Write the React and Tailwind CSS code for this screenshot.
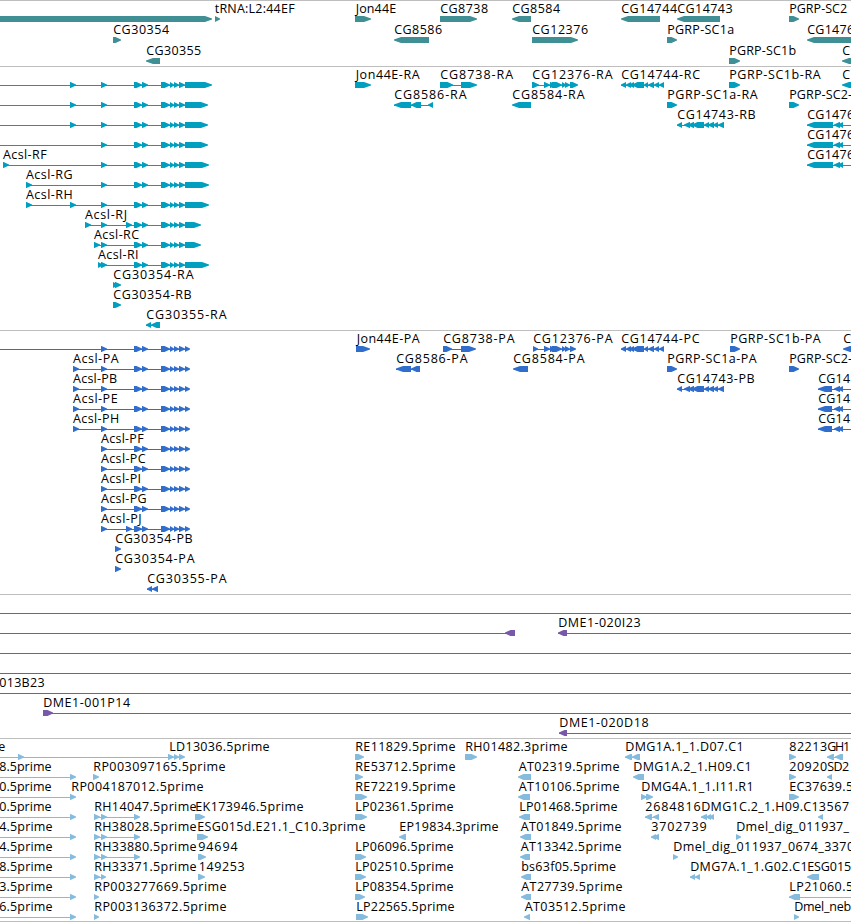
// Genome browser view: stacked tracks of features along one shared x axis.
// A feature is { dir, exons, label }, where label is [text, from, to].

const f = (dir, exons, label) => ({ dir, exons, label });

const OFF_LEFT = -20;
const OFF_RIGHT = 870;

// exons shared by all of the Acsl isoforms
const ACSL_MID = [[134, 142], [142, 148], [161, 170], [170, 174], [174, 179], [179, 185]];
const acslR = (first, end, label) => f(1, [...first, ...ACSL_MID, [185, end]], label);
const acslP = (first, label) => f(1, [...first, ...ACSL_MID, [185, 190]], label);

const CG14744 = [[621, 626], [626, 631], [629, 634], [632, 644], [644, 648], [648, 654], [654, 659], [659, 664]];
const CG14743 = [[677, 682], [684, 690], [688, 694], [692, 704], [704, 709], [708, 714], [713, 718], [718, 724]];
const CG12376 = [[544, 550], [550, 556], [552, 562], [562, 566], [565, 570]];

const cg1476 = () => f(-1, [[807, 833], [834, 840], [838, 843], [OFF_RIGHT, 880]], ["CG1476", 808, 854]);
const cg14p = () => f(-1, [[818, 832], [834, 840], [838, 843], [OFF_RIGHT, 880]], ["CG14", 819, 850]);

const genes = [
  [
    f(1, [[OFF_LEFT, 212]]),
    f(1, [[215, 220]], ["tRNA:L2:44EF", 215.5, 294.5]),
    f(1, [[355, 371]], ["Jon44E", 356.5, 396]),
    f(1, [[440, 477]], ["CG8738", 441, 488]),
    f(-1, [[512, 531]], ["CG8584", 513, 560]),
    f(-1, [[621, 660]], ["CG14744", 622, 677]),
    f(-1, [[677, 720]], ["CG14743", 678, 732.5]),
    f(1, [[789, 799]], ["PGRP-SC2", 790, 847]),
  ],
  [
    f(1, [[113, 121]], ["CG30354", 114, 169]),
    f(-1, [[394, 429]], ["CG8586", 395, 442]),
    f(1, [[532, 578]], ["CG12376", 533, 588]),
    f(1, [[667, 677]], ["PGRP-SC1a", 668, 734]),
    f(-1, [[807, OFF_RIGHT]], ["CG1476", 808, 854]),
  ],
  [
    f(-1, [[146, 160]], ["CG30355", 147, 201]),
    f(1, [[729, 740]], ["PGRP-SC1b", 730, 796]),
    f(-1, [[842, OFF_RIGHT]], ["C", 843, 850]),
  ],
];

const transcripts = [
  [
    acslR([[OFF_LEFT, -10], [70, 76], [101, 107]], 212),
    f(1, [[355, 371]], ["Jon44E-RA", 356.5, 419.5]),
    f(1, [[440, 453], [461, 477]], ["CG8738-RA", 441, 513]),
    f(1, [[532, 539], ...CG12376, [570, 578]], ["CG12376-RA", 533, 612.5]),
    f(-1, CG14744, ["CG14744-RC", 622, 700]),
    f(1, [[729, 740]], ["PGRP-SC1b-RA", 730, 820.5]),
    f(-1, [[842, OFF_RIGHT]], ["C", 843, 850]),
  ],
  [
    acslR([[OFF_LEFT, -10], [70, 76], [101, 107]], 208),
    f(-1, [[394, 411], [411, 421], [428, 433]], ["CG8586-RA", 395, 466.5]),
    f(-1, [[512, 531]], ["CG8584-RA", 513, 584.5]),
    f(1, [[667, 677]], ["PGRP-SC1a-RA", 668, 757.5]),
    f(1, [[789, 799]], ["PGRP-SC2-", 790, 852]),
  ],
  [
    acslR([[OFF_LEFT, -10], [70, 76], [101, 107]], 208),
    f(-1, CG14743, ["CG14743-RB", 678, 755.5]),
    cg1476(),
  ],
  [acslR([[OFF_LEFT, -10], [101, 107]], 208), cg1476()],
  [acslR([[3, 9], [101, 107]], 209, ["Acsl-RF", 3.8, 46.5]), cg1476()],
  [acslR([[26, 32], [101, 107]], 209, ["Acsl-RG", 26.8, 72.5])],
  [acslR([[26, 32], [70, 76], [101, 107]], 209, ["Acsl-RH", 26.8, 72.5])],
  [acslR([[85, 91], [101, 107], [126, 132]], 201, ["Acsl-RJ", 85.8, 127])],
  [acslR([[94, 100], [101, 107]], 201, ["Acsl-RC", 94.8, 139])],
  [acslR([[98, 103], [101, 107]], 209, ["Acsl-RI", 98.8, 138.5])],
  [f(1, [[113, 118], [115, 121]], ["CG30354-RA", 114, 193.5])],
  [f(1, [[113, 121]], ["CG30354-RB", 114, 191.5])],
  [f(-1, [[146, 151], [151, 160]], ["CG30355-RA", 147, 226.5])],
];

const proteins = [
  [
    acslP([[OFF_LEFT, -10], [101, 107]]),
    f(1, [[356, 370]], ["Jon44E-PA", 357.5, 419.5]),
    f(1, [[443, 452], [461, 476]], ["CG8738-PA", 444, 514.5]),
    f(1, [[533, 538], ...CG12376, [570, 576]], ["CG12376-PA", 534, 612.5]),
    f(-1, CG14744, ["CG14744-PC", 622, 699.5]),
    f(1, [[730, 740]], ["PGRP-SC1b-PA", 731, 820.5]),
    f(-1, [[843, OFF_RIGHT]], ["C", 844, 851]),
  ],
  [
    acslP([[73, 79], [101, 107]], ["Acsl-PA", 73.8, 118.5]),
    f(-1, [[396, 411], [411, 420]], ["CG8586-PA", 397, 467.5]),
    f(-1, [[513, 528]], ["CG8584-PA", 514, 584.5]),
    f(1, [[667, 677]], ["PGRP-SC1a-PA", 668, 756.5]),
    f(1, [[789, 799]], ["PGRP-SC2-", 790, 852]),
  ],
  [
    acslP([[73, 79], [101, 107]], ["Acsl-PB", 73.8, 117]),
    f(-1, CG14743, ["CG14743-PB", 678, 754.5]),
    cg14p(),
  ],
  [acslP([[73, 79], [101, 107]], ["Acsl-PE", 73.8, 117.5]), cg14p()],
  [acslP([[73, 79], [101, 107]], ["Acsl-PH", 73.8, 119]), cg14p()],
  [acslP([[101, 107]], ["Acsl-PF", 101.8, 143.5])],
  [acslP([[101, 107]], ["Acsl-PC", 101.8, 145.5])],
  [acslP([[101, 107]], ["Acsl-PI", 101.8, 141])],
  [acslP([[101, 107]], ["Acsl-PG", 101.8, 146.5])],
  [acslP([[101, 107], [126, 132]], ["Acsl-PJ", 101.8, 141.5])],
  [f(1, [[115, 121]], ["CG30354-PB", 116, 192.5])],
  [f(1, [[115, 121]], ["CG30354-PA", 116, 194.5])],
  [f(-1, [[147, 152], [152, 158]], ["CG30355-PA", 148, 226.5])],
];

const through = (label) => f(1, [[OFF_LEFT, -10], [OFF_RIGHT, 880]], label);

const bacs = [
  [through()],
  [
    f(-1, [[OFF_LEFT, -10], [505, 515]]),
    f(-1, [[558, 567], [OFF_RIGHT, 880]], ["DME1-020I23", 559, 640.5]),
  ],
  [through()],
  [through()],
  [through(["013B23", 0, 44.5])],
  [f(1, [[43, 53], [OFF_RIGHT, 880]], ["DME1-001P14", 44, 130])],
  [f(-1, [[559, 567], [OFF_RIGHT, 880]], ["DME1-020D18", 560, 648.5])],
];

const fromLeft = (label) => f(1, [[OFF_LEFT, -10], [70, 76]], label);

const ests = [
  [
    f(1, [[OFF_LEFT, -10], [18, 24], [168, 174], [174, 179], [179, 185]], ["e", -1, 5]),
    f(0, [], ["LD13036.5prime", 170, 269.5]),
    f(1, [[355, 364]], ["RE11829.5prime", 356, 455.5]),
    f(1, [[465, 477]], ["RH01482.3prime", 466, 567.5]),
    f(-1, [[625, 632], [632, 640]], ["DMG1A.1_1.D07.C1", 626, 743.5]),
    f(1, [[789, 796]], ["82213", 790, 827]),
    f(-1, [[827, 834], [835, 843]], ["GH1", 828, 850]),
  ],
  [
    fromLeft(["8.5prime", 0, 51.5]),
    f(1, [[93, 99]], ["RP003097165.5prime", 94, 225.5]),
    f(1, [[355, 363]], ["RE53712.5prime", 356, 455.5]),
    f(-1, [[518, 531]], ["AT02319.5prime", 519.5, 619.5]),
    f(-1, [[633, 644]], ["DMG1A.2_1.H09.C1", 634, 751.5]),
    f(1, [[789, 796]], ["20920", 790, 827]),
    f(-1, [[827, 832]], ["SD2", 828, 849]),
  ],
  [
    fromLeft(["0.5prime", 0, 51.5]),
    f(0, [], ["RP004187012.5prime", 72, 203.5]),
    f(1, [[355, 367]], ["RE72219.5prime", 356, 455.5]),
    f(-1, [[518, 530]], ["AT10106.5prime", 519.5, 619.5]),
    f(1, [[641, 647], [646, 653]], ["DMG4A.1_1.I11.R1", 642, 753.5]),
    f(1, [[789, 799]], ["EC37639.5", 790, 853]),
  ],
  [
    fromLeft(["0.5prime", 0, 51.5]),
    f(1, [[94, 100], [101, 107], [134, 140]], ["RH14047.5prime", 95, 196.5]),
    f(1, [[195, 205]], ["EK173946.5prime", 196, 303.5]),
    f(1, [[355, 367]], ["LP02361.5prime", 356, 453.5]),
    f(-1, [[519, 530]], ["LP01468.5prime", 520, 617.5]),
    f(-1, [[645, 652], [653, 659]], ["2684816", 646, 700.5]),
    f(-1, [[701, 707], [706, 711], [709, 714]], ["DMG1C.2_1.H09.C1", 702, 818.5]),
    f(-1, [[818, 823]], ["3567", 819.5, 849]),
  ],
  [
    fromLeft(["4.5prime", 0, 52.5]),
    f(1, [[94, 100], [101, 107], [134, 140]], ["RH38028.5prime", 95, 196.5]),
    f(1, [[197, 208]], ["ESG015d.E21.1_C10.3prime", 198, 365.5]),
    f(-1, [[399, 406]], ["EP19834.3prime", 400, 498.5]),
    f(-1, [[520, 531]], ["AT01849.5prime", 521.5, 621.5]),
    f(-1, [[651, 656], [653, 659]], ["3702739", 652, 706.5]),
    f(1, [[736, 741]], ["Dmel_dig_011937_", 737, 849]),
  ],
  [
    fromLeft(["4.5prime", 0, 52.5]),
    f(1, [[94, 100], [101, 107], [134, 140]], ["RH33880.5prime", 95, 196.5]),
    f(1, [[198, 206]], ["94694", 199, 237.5]),
    f(1, [[355, 366]], ["LP06096.5prime", 356, 453.5]),
    f(-1, [[520, 530]], ["AT13342.5prime", 521.5, 621.5]),
    f(1, [[673, 678]], ["Dmel_dig_011937_0674_3370", 674, 854]),
  ],
  [
    fromLeft(["8.5prime", 0, 52.5]),
    f(1, [[94, 100], [101, 106]], ["RH33371.5prime", 95, 196.5]),
    f(1, [[198, 205]], ["149253", 199.5, 244.5]),
    f(1, [[355, 366]], ["LP02510.5prime", 356, 453.5]),
    f(-1, [[521, 531]], ["bs63f05.5prime", 522, 616]),
    f(-1, [[690, 695], [695, 700]], ["DMG7A.1_1.G02.C1", 691, 807.5]),
    f(-1, [[807, 819]], ["ESG015", 808, 851]),
  ],
  [
    fromLeft(["3.5prime", 0, 52.5]),
    f(1, [[94, 99]], ["RP003277669.5prime", 95, 226.5]),
    f(1, [[355, 365]], ["LP08354.5prime", 356, 453.5]),
    f(-1, [[521, 531]], ["AT27739.5prime", 522, 622.5]),
    f(-1, [[789, 800], [OFF_RIGHT, 880]], ["LP21060.5", 790, 853]),
  ],
  [
    fromLeft(["6.5prime", 0, 52.5]),
    f(1, [[94, 99]], ["RP003136372.5prime", 95, 226.5]),
    f(1, [[356, 368]], ["LP22565.5prime", 357, 454.5]),
    f(-1, [[524, 530]], ["AT03512.5prime", 525.5, 625.5]),
    f(1, [[794, 799]], ["Dmel_neb", 795, 851]),
  ],
];

function Exon({ dir, from, to }) {
  const w = to - from;
  const head = Math.min(w, w < 14 ? 5.5 : 7);
  const tip = dir > 0 ? to : from;
  const tail = dir > 0 ? from : to;
  const neck = tip - dir * head;
  return <polygon points={`${tail},15 ${neck},15 ${tip},17.6 ${tip},18.6 ${neck},21 ${tail},21`} />;
}

function Feature({ dir, exons, label }) {
  const start = exons.length ? exons[0][0] : 0;
  const end = exons.length ? exons[exons.length - 1][1] : 0;
  return (
    <g>
      {exons.length > 1 && <rect x={start} y={18} width={end - start - 1} height={1} />}
      {exons.map(([from, to], i) => (
        <Exon key={i} dir={dir} from={from} to={to} />
      ))}
      {label && (
        <text
          x={label[1] - 0.8}
          y={12}
          textLength={label[2] - label[1] + 0.9}
          className="fill-black"
        >
          {label[0]}
        </text>
      )}
    </g>
  );
}

function Track({ rows, className, rowClass = "h-5" }) {
  return (
    <section className={`flex flex-col border-t border-[#bebebe] ${className}`}>
      {rows.map((features, i) => (
        <svg key={i} className={`block w-full shrink-0 overflow-visible ${rowClass}`}>
          {features.map((feature, j) => (
            <Feature key={j} {...feature} />
          ))}
        </svg>
      ))}
    </section>
  );
}

export default function App() {
  return (
    <main className="flex w-[851px] flex-col overflow-hidden border-b border-[#bebebe] bg-white font-['Open_Sans','Noto_Sans',sans-serif] text-[12.5px]">
      <Track rows={genes} className="h-[66px] fill-[#3f8f95]" rowClass="h-[21px]" />
      <Track rows={transcripts} className="h-[264px] fill-[#009fc0]" />
      <Track rows={proteins} className="h-[264px] fill-[#316ecb]" />
      <Track rows={bacs} className="h-[144px] fill-[#7759a8]" />
      <Track rows={ests} className="h-[183px] fill-[#85bcde]" />
    </main>
  );
}
